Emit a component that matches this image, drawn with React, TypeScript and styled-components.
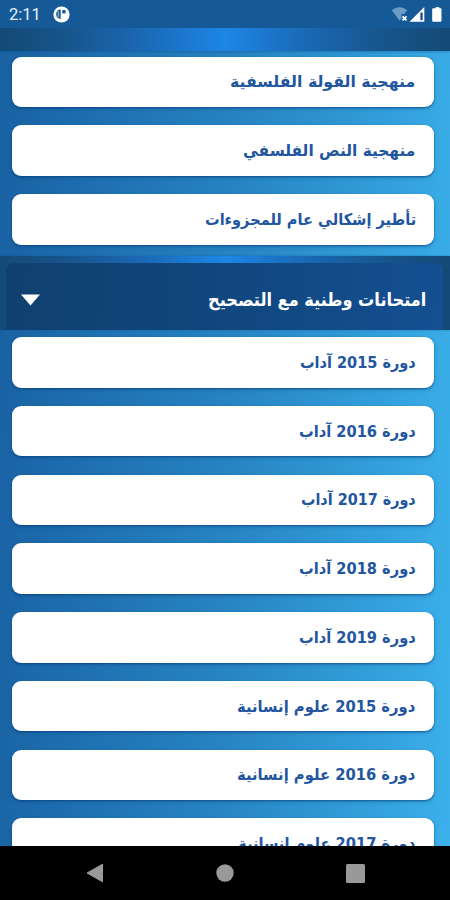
import React, { useLayoutEffect, useRef, useState } from 'react';
import styled, { createGlobalStyle } from 'styled-components';

const GlobalStyle = createGlobalStyle`
  * { box-sizing: border-box; }
  body { margin: 0; background: #000; }
`;

const Screen = styled.div`
  width: 450px;
  height: 900px;
  display: flex;
  flex-direction: column;
  overflow: hidden;
  font-family: 'DejaVu Sans', sans-serif;
`;

const StatusBar = styled.header`
  flex: 0 0 28px;
  display: flex;
  align-items: center;
  justify-content: space-between;
  padding: 1px 8px 0 9px;
  background: #155a97;
  color: #e6f0fc;
  font: 400 16.5px/26px Roboto, sans-serif;
`;

const StatusGroup = styled.div<{ $gap: number }>`
  display: flex;
  align-items: center;
  gap: ${(p) => p.$gap}px;
`;

const Content = styled.main`
  flex: 1;
  min-height: 0;
  overflow: hidden;
  background: linear-gradient(92deg, #1961a2 0%, #1e6fb0 20%, #2783c1 50%, #329fdb 82%, #3bb0ea 100%);
`;

const glow = 'linear-gradient(90deg, #134a76 0%, #17548a 14%, #1a66b0 30%, #1d86e6 50%, #1a66b0 70%, #17548a 86%, #134a76 100%)';

const HeaderEdge = styled.div`
  height: 23px;
  background: ${glow};
  box-shadow: 0 1px 2px rgba(10, 70, 130, 0.35);
`;

const SectionHeader = styled.section`
  height: 74px;
  padding: 7px 7px 0 6px;
  background: ${glow};
  box-shadow: 0 0 2px rgba(10, 70, 130, 0.4);
`;

const SectionTitle = styled.div`
  height: 67px;
  display: flex;
  align-items: center;
  justify-content: space-between;
  padding: 8px 17px 0 15px;
  border-radius: 8px 8px 0 0;
  background: linear-gradient(92deg, #10406f 0%, #10467c 45%, #144f92 100%);
  color: #fff;
  font-size: 18px;
  font-weight: 700;
`;

const CardList = styled.div<{ $top: number; $bottom: number }>`
  display: flex;
  flex-direction: column;
  gap: 18.35px;
  padding: ${(p) => p.$top}px 16.3px ${(p) => p.$bottom}px 11.7px;
`;

const Card = styled.article`
  height: 50.4px;
  flex: none;
  display: flex;
  align-items: center;
  justify-content: flex-end;
  padding: 1px 18px 0 0;
  border-radius: 9px;
  background: #fff;
  box-shadow: 0 1px 2px rgba(8, 62, 122, 0.65), 0 2px 4px rgba(8, 62, 122, 0.2);
  color: #22569f;
  font-size: 16px;
  font-weight: 700;
`;

const Label = styled.span`
  display: inline-block;
  white-space: nowrap;
  line-height: 24px;
  transform-origin: right center;
`;

const NavBar = styled.nav`
  flex: 0 0 54px;
  display: grid;
  grid-template-columns: repeat(3, 130px);
  justify-content: center;
  align-items: center;
  justify-items: center;
  background: #000;
`;

function FittedLabel({ text, width }: { text: string; width: number }) {
  const ref = useRef<HTMLSpanElement>(null);
  const [scale, setScale] = useState(1);
  useLayoutEffect(() => {
    if (ref.current) setScale(width / ref.current.offsetWidth);
  }, [text, width]);
  return (
    <Label ref={ref} dir="rtl" lang="ar" style={{ transform: `scaleX(${scale})` }}>
      {text}
    </Label>
  );
}

type Entry = { text: string; width: number };

const methods: Entry[] = [
  { text: 'منهجية القولة الفلسفية', width: 185 },
  { text: 'منهجية النص الفلسفي', width: 172 },
  { text: 'تأطير إشكالي عام للمجزوءات', width: 211 },
];

const exams: Entry[] = [
  { text: 'دورة 2015 آداب', width: 116 },
  { text: 'دورة 2016 آداب', width: 117 },
  { text: 'دورة 2017 آداب', width: 115 },
  { text: 'دورة 2018 آداب', width: 117 },
  { text: 'دورة 2019 آداب', width: 117 },
  { text: 'دورة 2015 علوم إنسانية', width: 178 },
  { text: 'دورة 2016 علوم إنسانية', width: 178 },
  { text: 'دورة 2017 علوم إنسانية', width: 177 },
];

const AppIcon = () => (
  <svg width="17" height="17" viewBox="0 0 17 17">
    <circle cx="8.5" cy="8.5" r="8.1" fill="#fff" />
    <path d="M7.7 3.5v9.4C4.9 12.9 3.2 11 3.2 8.2s1.7-4.7 4.5-4.7Z" fill="#155a97" />
    <path d="M5.3 5.1v6.2" stroke="#fff" strokeWidth=".6" />
    <rect x="9.2" y="3.9" width="3.4" height="3.6" rx="1" fill="#155a97" />
  </svg>
);

const StatusIcons = () => (
  <svg width="51" height="17" viewBox="0 0 51 17">
    <path d="M.8 4.3C5.3.3 11.7.3 16.2 4.3L13.2 8.1H10.5V12.5L8.5 14.5Z" fill="#6a9cc7" />
    <path d="m11.5 10.3 4 4m0-4-4 4" stroke="#fff" strokeWidth="1.8" />
    <path d="M18.5 15.7 33.3 1v14.7Z" fill="#fff" />
    <path d="M30.5 6.5v7.7" stroke="#1c3f93" strokeWidth="2.2" />
    <path d="M42.8 2.2h2V1h3.4v1.2h1.3q1 0 1 1v11.5q0 1-1 1h-7.3q-1 0-1-1V3.2q0-1 1-1Z" fill="#fff" />
  </svg>
);

export default function App() {
  return (
    <Screen>
      <GlobalStyle />
      <StatusBar>
        <StatusGroup $gap={12}>
          <span>2:11</span>
          <AppIcon />
        </StatusGroup>
        <StatusIcons />
      </StatusBar>
      <Content>
        <HeaderEdge />
        <CardList $top={5.7} $bottom={11.4}>
          {methods.map((m) => (
            <Card key={m.text}><FittedLabel {...m} /></Card>
          ))}
        </CardList>
        <SectionHeader>
          <SectionTitle>
            <svg width="20" height="12" viewBox="0 0 20 12">
              <path d="M0 .5h19L9.5 11.5Z" fill="#fff" />
            </svg>
            <FittedLabel text="امتحانات وطنية مع التصحيح" width={218} />
          </SectionTitle>
        </SectionHeader>
        <CardList $top={7.3} $bottom={0}>
          {exams.map((e) => (
            <Card key={e.text}><FittedLabel {...e} /></Card>
          ))}
        </CardList>
      </Content>
      <NavBar>
        <svg width="18" height="20" viewBox="0 0 18 20">
          <path d="M16.5 1.2v17.6L1 10Z" fill="#999" stroke="#999" strokeLinejoin="round" />
        </svg>
        <svg width="18" height="18" viewBox="0 0 18 18"><circle cx="9" cy="9" r="8.7" fill="#999" /></svg>
        <svg width="19" height="19" viewBox="0 0 19 19"><rect width="19" height="19" rx="1.5" fill="#999" /></svg>
      </NavBar>
    </Screen>
  );
}
